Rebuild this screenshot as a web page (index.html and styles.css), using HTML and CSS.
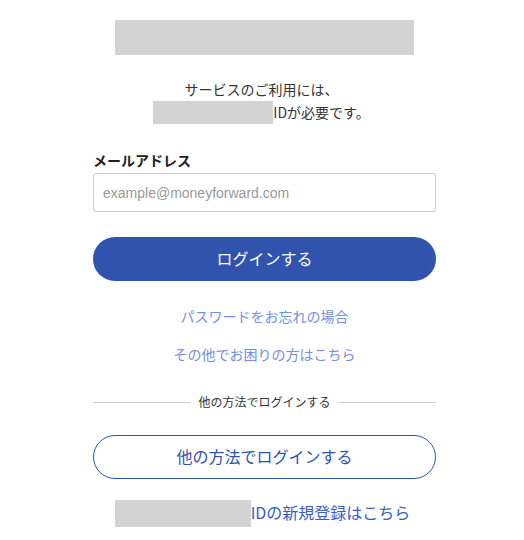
FILE: index.html
```html
<!DOCTYPE html>
<html lang="ja">
<head>
<meta charset="utf-8">
<link rel="stylesheet" href="styles.css">
</head>
<body>
<div class="page">
  <div class="logo"></div>
  <p class="intro">サービスのご利用には、<br><span class="mask mask-sm"></span>IDが必要です。</p>
  <label class="label" for="email">メールアドレス</label>
  <input id="email" class="input" type="email" placeholder="example@moneyforward.com">
  <button class="btn btn-primary">ログインする</button>
  <a class="link" href="#">パスワードをお忘れの場合</a>
  <a class="link link-2" href="#">その他でお困りの方はこちら</a>
  <div class="divider"><span>他の方法でログインする</span></div>
  <button class="btn btn-outline">他の方法でログインする</button>
  <div class="signup"><span class="mask mask-lg"></span><a href="#">IDの新規登録はこちら</a></div>
</div>
</body>
</html>
```
FILE: styles.css
```css
* { box-sizing: border-box; }
html, body { margin: 0; padding: 0; background: #fff; }
body {
  font-family: "Noto Sans CJK JP", "Noto Sans", sans-serif;
  color: #333;
}
.page {
  display: flex;
  flex-direction: column;
  padding: 20px 88px 0 93px;
}
.logo {
  width: 299px;
  height: 35px;
  background: #d3d3d3;
  align-self: center;
}
.mask { display: inline-block; background: #d3d3d3; vertical-align: top; }
.mask-sm { width: 120px; height: 23px; }
.mask-lg { width: 136px; height: 27px; }
.intro {
  margin: 23px 0 0;
  text-align: center;
  font-size: 14px;
  line-height: 23px;
  color: #333;
  margin-left: -6px;
}
.label {
  margin-top: 26px;
  font-size: 14px;
  line-height: 20px;
  font-weight: bold;
  color: #222;
}
.input {
  margin-top: 3px;
  height: 39px;
  width: 100%;
  border: 1px solid #ccc;
  border-radius: 3px;
  padding: 0 9px;
  font-family: "Liberation Sans", Arial, sans-serif;
  font-size: 14px;
  color: #333;
}
.input::placeholder { color: #999; }
.btn {
  width: 100%;
  height: 44px;
  border-radius: 22px;
  font-family: "Noto Sans CJK JP", sans-serif;
  font-size: 16px;
  padding: 0 0 3px;
  cursor: pointer;
}
.btn-primary {
  margin-top: 25px;
  background: #3053ae;
  border: none;
  color: #fff;
}
.link {
  display: block;
  text-align: center;
  font-size: 14px;
  line-height: 16px;
  padding-bottom: 4px;
  color: #7590e0;
  text-decoration: none;
  margin-top: 27px;
}
.link-2 { margin-top: 18px; }
.divider {
  margin-top: 26px;
  display: flex;
  align-items: center;
  gap: 8px;
  font-size: 12px;
  line-height: 20px;
  color: #333;
}
.divider::before, .divider::after {
  content: "";
  flex: 1;
  height: 1px;
  background: #ccc;
}
.btn-outline {
  margin-top: 23px;
  background: #fff;
  border: 1px solid #3053ae;
  color: #3053ae;
}
.signup {
  margin-top: 21px;
  display: flex;
  justify-content: center;
  margin-left: -4px;
}
.signup a {
  font-size: 16px;
  line-height: 25px;
  color: #3a5cc4;
  text-decoration: none;
}
```
